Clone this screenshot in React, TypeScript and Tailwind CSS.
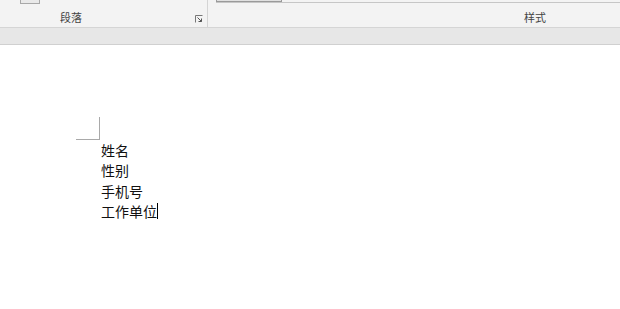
const font = {
  fontFamily: '"Microsoft YaHei", "Noto Sans CJK SC", sans-serif',
};

function LauncherIcon() {
  return (
    <svg width="8" height="8" viewBox="0 0 8 8" className="block">
      <path d="M0.5 7.5V0.5H7.5" fill="none" stroke="#777" strokeWidth="1" />
      <path d="M2.5 2.5L6.5 6.5M3.5 6.5H6.5V3.5" fill="none" stroke="#555" strokeWidth="1" />
    </svg>
  );
}

export default function App() {
  const lines = ["姓名", "性别", "手机号", "工作单位"];
  return (
    <div className="w-[620px] h-[309px] bg-white overflow-hidden" style={font}>
      {/* ribbon */}
      <div className="h-[28px] bg-[#f3f3f3] border-b border-[#d5d5d5] flex">
        <div className="w-[207px] relative flex flex-col">
          <div className="ml-[20px] w-[20px] h-[4px] border border-t-0 border-[#a8a8a8] bg-[#e9e9e9]" />
          <div className="flex-1 flex items-end justify-between pb-[3px]">
            <span className="ml-[60px] text-[11px] leading-[14px] text-[#444]">段落</span>
            <span className="mr-[4px] mb-[1px]">
              <LauncherIcon />
            </span>
          </div>
        </div>
        <div className="w-px bg-[#d4d4d4]" />
        <div className="flex-1 flex flex-col">
          <div className="ml-[8px] h-[3px] border-b border-[#c6c6c6] flex">
            <div className="w-[66px] h-[2px] border-b border-x border-[#9a9a9a] bg-[#e0e0e0]" />
          </div>
          <div className="flex-1 flex items-end pb-[3px]">
            <span className="ml-[316px] text-[11px] leading-[14px] text-[#444]">样式</span>
          </div>
        </div>
      </div>
      {/* gray band */}
      <div className="h-[17px] bg-[#e7e7e7] border-b border-[#d0d0d0]" />
      {/* page */}
      <div className="pt-[72px] pl-[76px]">
        <div className="w-[24px] h-[23px] border-r border-b border-[#a9a9a9]" />
        <div className="pl-[25px] text-[14px] leading-[20.4px] text-[#111]">
          {lines.map((l, i) => (
            <div key={l} className="flex items-center">
              <span>{l}</span>
              {i === lines.length - 1 && <span className="w-px h-[16px] bg-black" />}
            </div>
          ))}
        </div>
      </div>
    </div>
  );
}
